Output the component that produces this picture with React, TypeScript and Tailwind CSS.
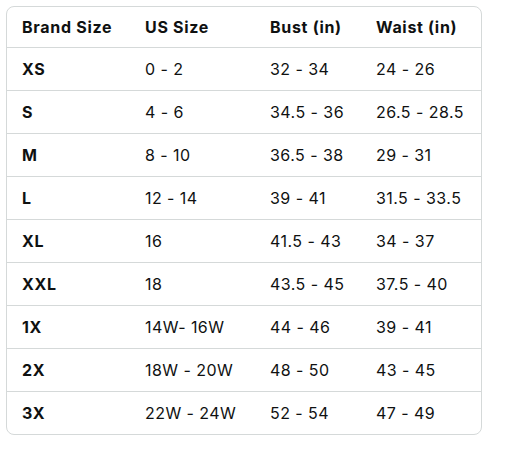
const HEAD = ["Brand Size", "US Size", "Bust (in)", "Waist (in)"];

const ROWS: [string, string, string, string][] = [
  ["XS", "0 - 2", "32 - 34", "24 - 26"],
  ["S", "4 - 6", "34.5 - 36", "26.5 - 28.5"],
  ["M", "8 - 10", "36.5 - 38", "29 - 31"],
  ["L", "12 - 14", "39 - 41", "31.5 - 33.5"],
  ["XL", "16", "41.5 - 43", "34 - 37"],
  ["XXL", "18", "43.5 - 45", "37.5 - 40"],
  ["1X", "14W- 16W", "44 - 46", "39 - 41"],
  ["2X", "18W - 20W", "48 - 50", "43 - 45"],
  ["3X", "22W - 24W", "52 - 54", "47 - 49"],
];

const COLS = "grid grid-cols-[123px_125px_106px_1fr]";

export default function App() {
  return (
    <div className="bg-white w-[507px] h-[470px] pt-[6px] pl-[6px] font-['Inter',sans-serif] text-[16px] text-[#0f1111] tracking-[0.45px]">
      <div className="w-[476px] border border-[#d5d9d9] rounded-[8px] overflow-hidden">
        {/* Header */}
        <div className={`${COLS} h-[40px] items-center font-bold tracking-[0.7px]`}>
          {HEAD.map((h) => (
            <div key={h} className="pl-[15px]">
              {h}
            </div>
          ))}
        </div>
        {ROWS.map((r) => (
          <div key={r[0]} className={`${COLS} h-[43px] items-center border-t border-[#d5d9d9]`}>
            {r.map((c, i) => (
              <div key={i} className={`pl-[15px] ${i === 0 ? "font-bold tracking-[0.7px]" : ""}`}>
                {c}
              </div>
            ))}
          </div>
        ))}
      </div>
    </div>
  );
}
